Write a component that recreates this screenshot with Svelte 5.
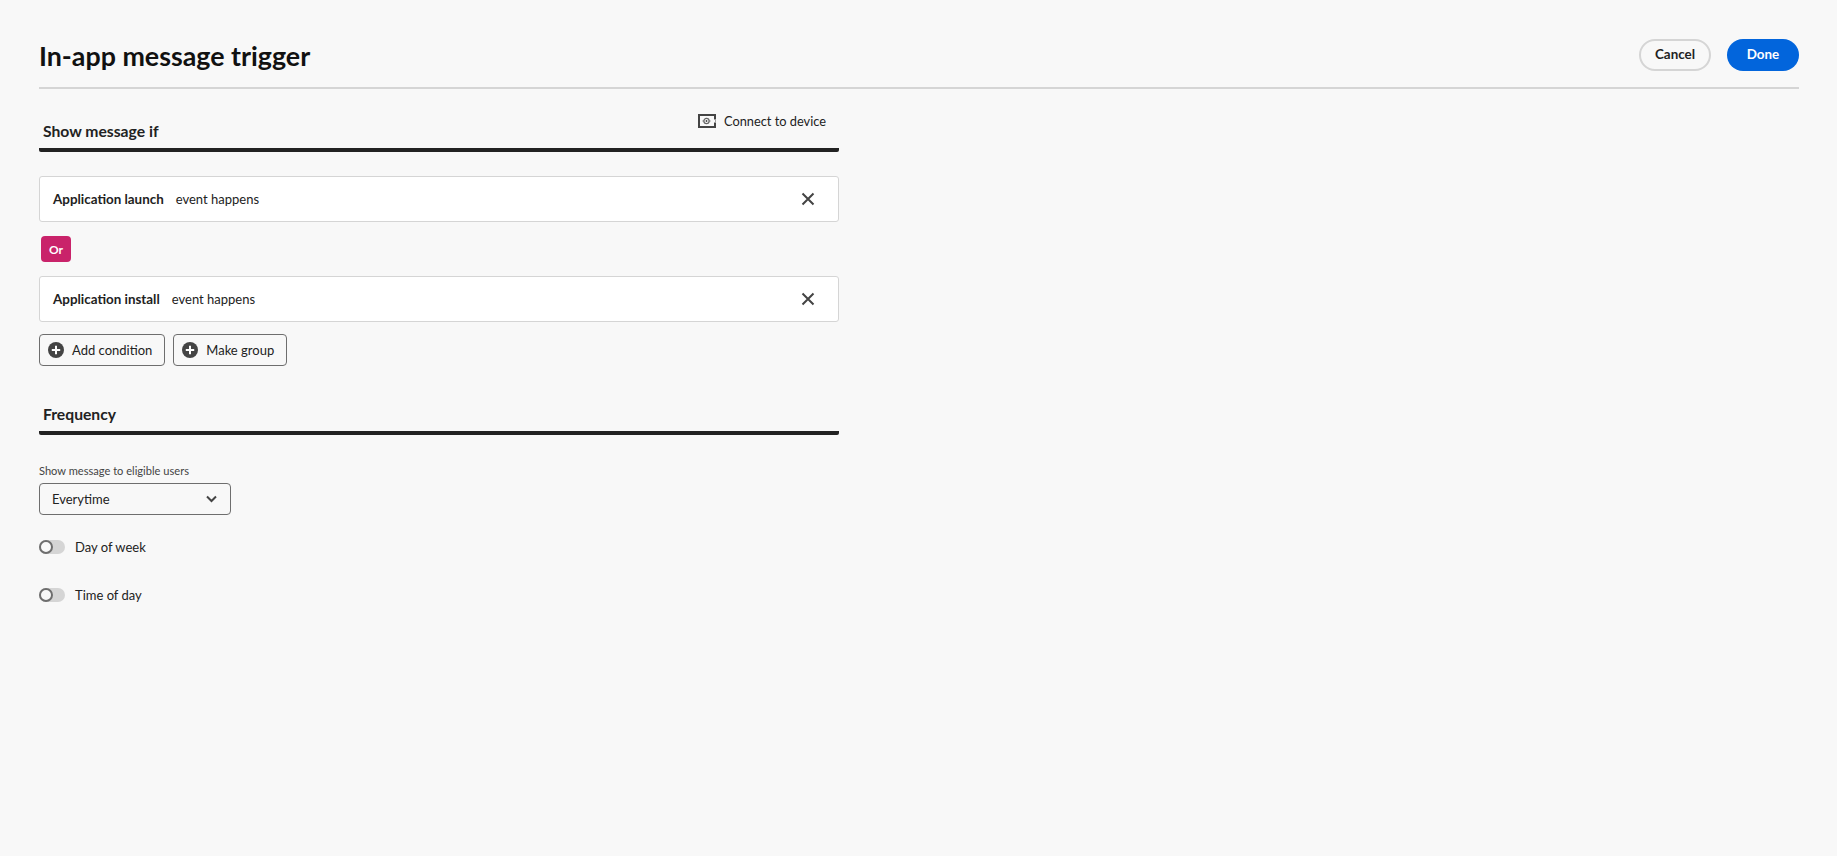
<script>
 let freq = 'Everytime';
</script>

<style>
 :global(body) {
  margin: 0;
  background: #f8f8f8;
 }

 .page {
  height: 856px;
  box-sizing: border-box;
  padding: 39px 38px 0 39px;
  background: #f8f8f8;
  color: #222;
  font-family: Lato, "Open Sans", sans-serif;
  font-size: 13px;
 }

 .header {
  display: flex;
  align-items: center;
  justify-content: space-between;
  height: 32px;
  padding-bottom: 16px;
  border-bottom: 2px solid #d5d5d5;
 }

 h1 {
  margin: 2px 0 0;
  font-size: 26.800px;
  font-weight: 700;
  color: #111;
 }

 .actions {
  display: flex;
  gap: 16px;
 }

 .pill {
  width: 72px;
  height: 32px;
  box-sizing: border-box;
  border-radius: 16px;
  border: 2px solid #d5d5d5;
  background: transparent;
  font: 700 13.400px Lato, sans-serif;
  color: #222;
  padding: 0 0 2px;
 }

 .pill.primary {
  border: none;
  background: #0265dc;
  color: #fff;
 }

 .left {
  width: 800px;
 }

 .section-head {
  display: flex;
  align-items: flex-end;
  justify-content: space-between;
  height: 54px;
  padding: 0 13px 5px 4px;
  border-bottom: 4px solid #222;
  border-radius: 0 0 2px 2px;
 }

 .section-head h2 {
  margin: 0;
  font-size: 15.700px;
  font-weight: 700;
  line-height: 24px;
 }

 .connect {
  display: flex;
  align-items: center;
  gap: 8px;
  margin-bottom: 14px;
  font-size: 12.800px;
 }

 .card {
  display: flex;
  align-items: center;
  height: 46px;
  box-sizing: border-box;
  padding: 0 23px 1px 13px;
  background: #fff;
  border: 1px solid #d5d5d5;
  border-radius: 3px;
 }

 .card b {
  margin-right: 12px;
  font-size: 13.400px;
 }

 .card svg {
  margin-left: auto;
 }

 .first {
  margin-top: 24px;
 }

 .or {
  display: flex;
  align-items: center;
  justify-content: center;
  width: 30px;
  height: 26px;
  margin: 14px 0 14px 2px;
  border-radius: 4px;
  background: #c9236a;
  color: #fff;
  font-size: 12px;
  font-weight: 700;
 }

 .buttons {
  display: flex;
  gap: 8px;
  margin-top: 12px;
 }

 .outline {
  display: flex;
  align-items: center;
  gap: 8px;
  height: 32px;
  box-sizing: border-box;
  padding: 0 12px 0 8px;
  border: 1px solid #6e6e6e;
  border-radius: 4px;
  color: #222;
 }

 .frequency {
  margin-top: 29px;
 }

 .frequency .section-head {
  height: 31px;
 }

 .label {
  margin-top: 28px;
  font-size: 11.100px;
  line-height: 16px;
  color: #444;
 }

 .select {
  display: flex;
  align-items: center;
  justify-content: space-between;
  width: 192px;
  height: 32px;
  box-sizing: border-box;
  margin-top: 4px;
  padding: 0 13px 0 12px;
  border: 1px solid #6e6e6e;
  border-radius: 4px;
 }

 .toggle {
  display: flex;
  align-items: center;
  gap: 10px;
  height: 20px;
  margin-top: 22px;
 }

 .toggle + .toggle {
  margin-top: 28px;
 }

 .track {
  position: relative;
  width: 26px;
  height: 14px;
  border-radius: 7px;
  background: #d5d5d5;
 }

 .track::before {
  content: '';
  position: absolute;
  left: 0;
  top: 0;
  width: 14px;
  height: 14px;
  box-sizing: border-box;
  border: 2px solid #6e6e6e;
  border-radius: 50%;
  background: #f8f8f8;
 }
</style>

{#snippet close()}
 <svg width="14" height="14" viewBox="0 0 14 14"><path d="M1.500 1.500 12.500 12.500M12.500 1.500 1.500 12.500" stroke="#444" stroke-width="2" fill="none" /></svg>
{/snippet}

{#snippet plus()}
 <svg width="16" height="16" viewBox="0 0 16 16"><circle cx="8" cy="8" r="8" fill="#444" /><path d="M8 3.800v8.400M3.800 8h8.400" stroke="#fff" stroke-width="2" /></svg>
{/snippet}

<div class="page">
 <div class="header">
  <h1>In-app message trigger</h1>
  <div class="actions">
   <button class="pill">Cancel</button>
   <button class="pill primary">Done</button>
  </div>
 </div>

 <div class="left">
  <div class="section-head">
   <h2>Show message if</h2>
   <div class="connect">
    <svg width="18" height="14" viewBox="0 0 18 14">
     <path fill="#444" fill-rule="evenodd" d="M0 0h18v5.500h-2V2H2v10h14V8.500h2V14H0z" />
     <rect x="17" y="6.500" width="1" height="1" fill="#444" />
     <circle cx="8.500" cy="7" r="2.600" stroke="#666" stroke-width="1.200" fill="none" />
     <circle cx="8.500" cy="7" r="0.900" fill="#444" />
     <path d="M4.500 7h1.400M11.100 7h1.400" stroke="#666" />
    </svg>
    Connect to device
   </div>
  </div>

  <div class="card first"><b>Application launch</b> event happens {@render close()}</div>
  <div class="or">Or</div>
  <div class="card"><b>Application install</b> event happens {@render close()}</div>

  <div class="buttons">
   <div class="outline">{@render plus()} Add condition</div>
   <div class="outline">{@render plus()} Make group</div>
  </div>

  <div class="frequency">
   <div class="section-head"><h2>Frequency</h2></div>
   <div class="label">Show message to eligible users</div>
   <div class="select">
    {freq}
    <svg width="11" height="8" viewBox="0 0 11 8"><path d="M1 1.500 5.500 6 10 1.500" stroke="#444" stroke-width="2" fill="none" /></svg>
   </div>
   <div class="toggle"><span class="track"></span> Day of week</div>
   <div class="toggle"><span class="track"></span> Time of day</div>
  </div>
 </div>
</div>
